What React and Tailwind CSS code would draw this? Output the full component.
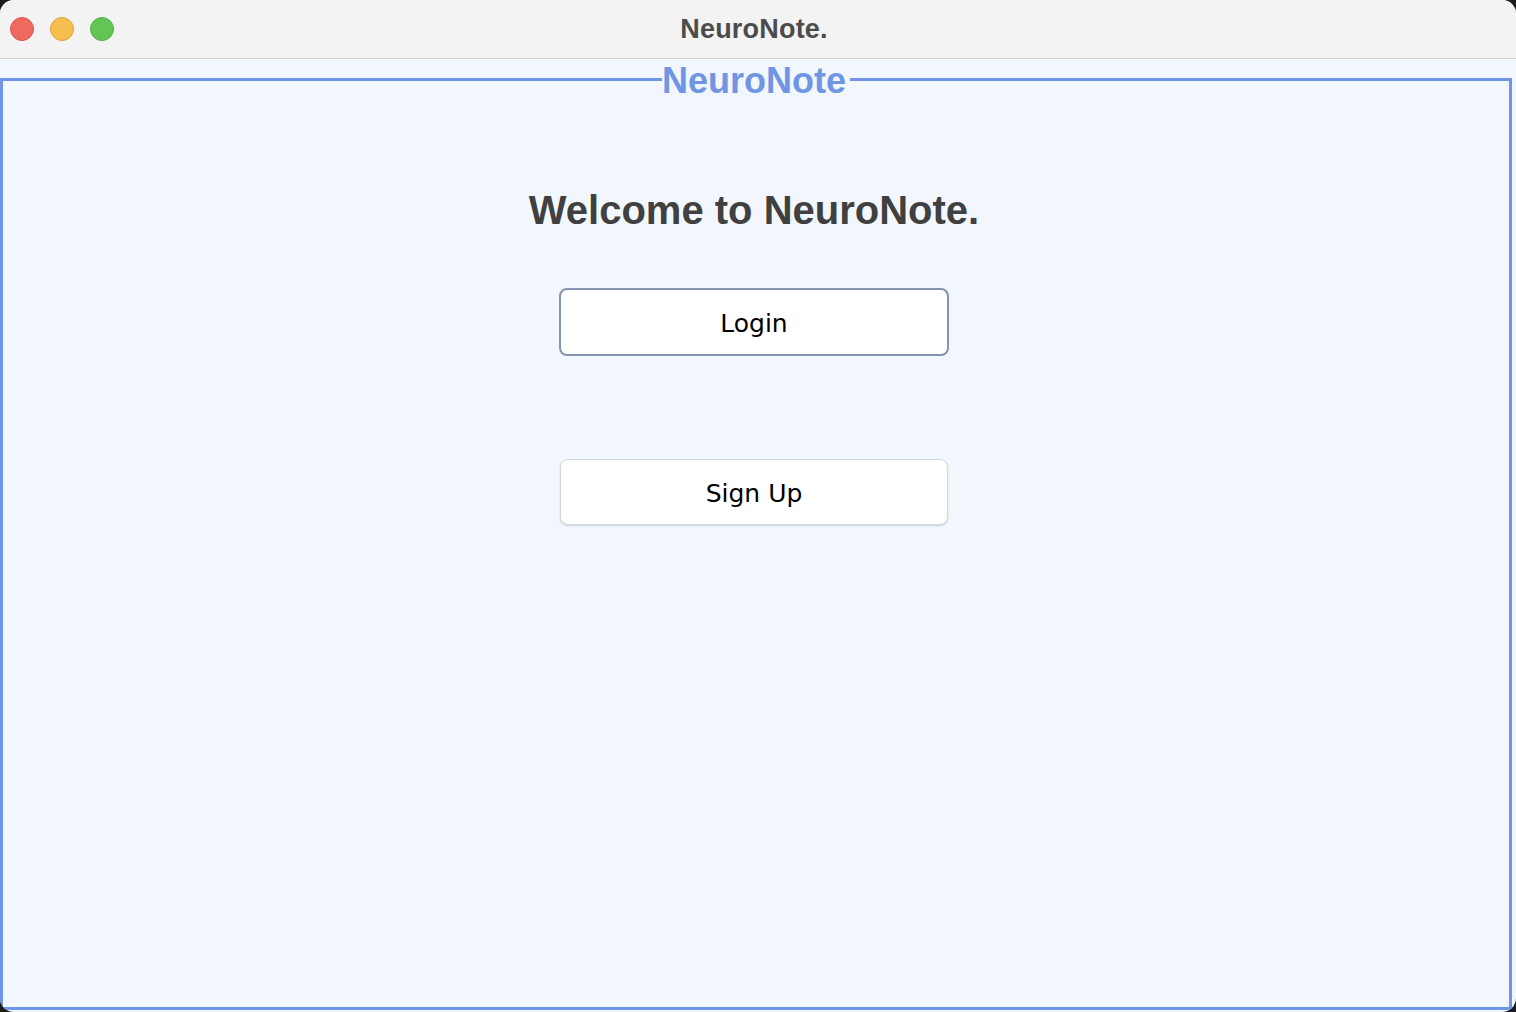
import React from 'react';

const TrafficLights = () => (
    <div className="flex items-center gap-[16px] pl-[10px]">
        <span className="w-[24px] h-[24px] rounded-full bg-[#ee6a5f] border border-[#d9574d]" />
        <span className="w-[24px] h-[24px] rounded-full bg-[#f5be4f] border border-[#dea23a]" />
        <span className="w-[24px] h-[24px] rounded-full bg-[#62c554] border border-[#50ad43]" />
    </div>
);

const App = () => {
    return (
        <div className="w-[1516px] h-[1012px] bg-[#1c1c1c] overflow-hidden">
            <div className="w-full h-full rounded-[14px] overflow-hidden bg-[#f2f7fe] flex flex-col">
                {/* title bar */}
                <div className="relative h-[59px] shrink-0 bg-[#f3f3f3] border-b border-[#d3d3d6] flex items-center">
                    <TrafficLights />
                    <div className="absolute inset-0 flex items-center justify-center pr-[8px]">
                        <span className="font-['Liberation_Sans',Arial,sans-serif] font-bold text-[27px] tracking-[0.2px] text-[#4b4b4b] leading-none">
                            NeuroNote.
                        </span>
                    </div>
                </div>

                {/* main panel */}
                <fieldset className="w-[1512px] h-[951px] border-[3px] border-[#7095e4] flex flex-col items-center">
                    <legend className="mx-auto px-[2px] font-['Liberation_Sans',Arial,sans-serif] font-bold text-[36px] leading-[40px] text-[#7095e4]">
                        <span className="relative top-[2px] -left-[2px]">NeuroNote</span>
                    </legend>

                    <div className="flex flex-col items-center w-full pr-[4px]">
                        <h1 className="mt-[88px] font-['Liberation_Sans',Arial,sans-serif] font-bold text-[40px] leading-[46px] text-[#404040]">
                            Welcome to NeuroNote.
                        </h1>

                        <button className="mt-[55px] w-[390px] h-[68px] pt-[3px] bg-white border-2 border-[#8594ad] rounded-[8px] flex items-center justify-center font-['DejaVu_Sans',sans-serif] text-[25px] text-black">
                            Login
                        </button>

                        <button className="mt-[103px] w-[388px] h-[66px] pt-[3px] bg-white border border-[#d6d8dc] rounded-[8px] shadow-[0_1px_2px_rgba(0,0,0,0.15)] flex items-center justify-center font-['DejaVu_Sans',sans-serif] text-[25px] text-black">
                            Sign Up
                        </button>
                    </div>
                </fieldset>
            </div>
        </div>
    );
};

export default App;
